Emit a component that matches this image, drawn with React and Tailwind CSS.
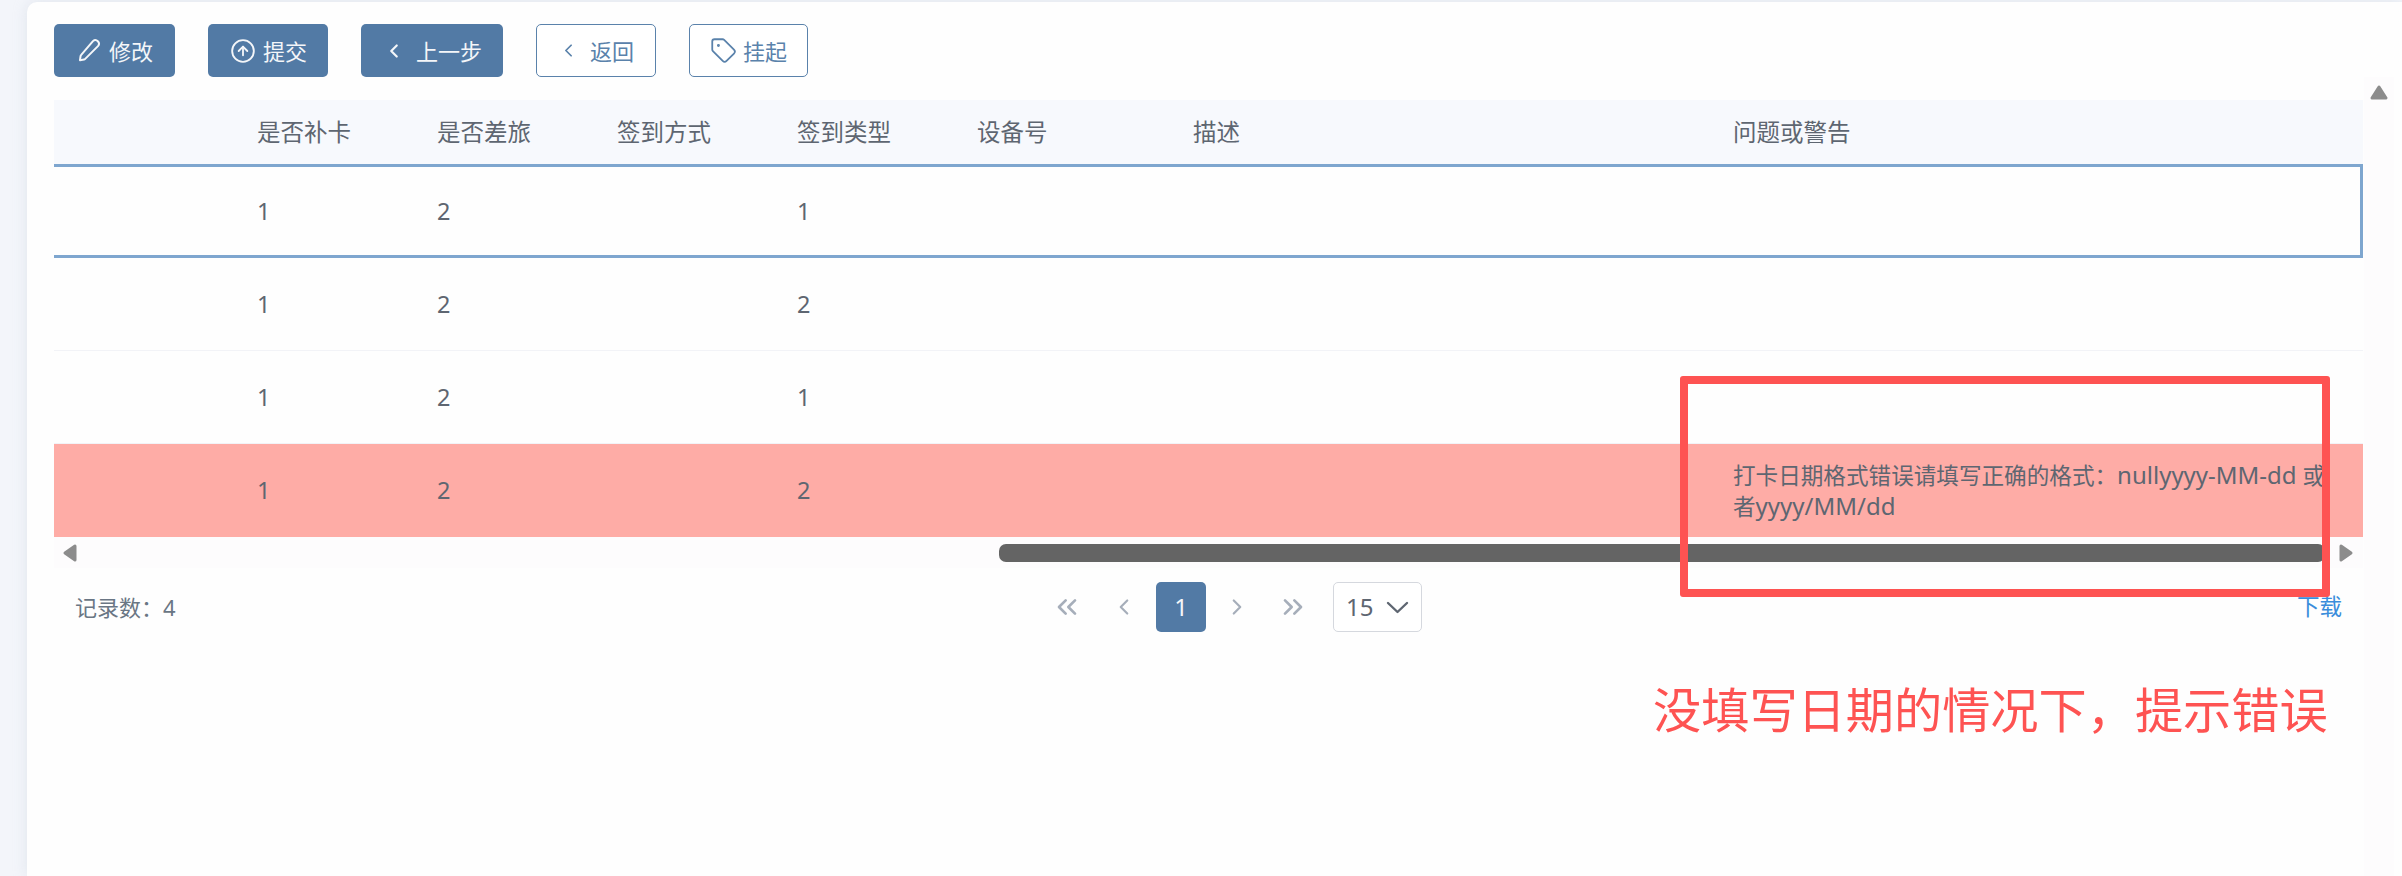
import { ChevronLeft, ChevronRight, ChevronsLeft, ChevronsRight, CircleArrowUp, Tag } from 'lucide-react';

const font = 'font-["Noto_Sans","Noto_Sans_CJK_SC",sans-serif]';
const cols = 'grid grid-cols-[203px_180px_180px_180px_180px_216px_540px_1fr] items-center';

const rows = [
  { a: '1', b: '2', c: '1' },
  { a: '1', b: '2', c: '2' },
  { a: '1', b: '2', c: '1' },
  { a: '1', b: '2', c: '2', error: true },
];

function PencilIcon() {
  return (
    <svg width="25" height="25" viewBox="0 0 24 24" fill="none" stroke="currentColor" strokeWidth="1.9" strokeLinejoin="round" strokeLinecap="round">
      <path d="M16.3 3a3.4 3.4 0 0 1 4.8 4.8L8.6 20.3a1.4 1.4 0 0 1-.8.4l-4 .6.6-4a1.4 1.4 0 0 1 .4-.8z" />
    </svg>
  );
}

function Arrow({ width, height, viewBox, points }) {
  return (
    <svg width={width} height={height} viewBox={viewBox}>
      <polygon points={points} fill="#8c8c8c" stroke="#8c8c8c" strokeWidth="3" strokeLinejoin="round" />
    </svg>
  );
}

function Toolbar() {
  return (
    <div className="flex gap-[33px] pl-[27px] pt-[22px] text-[22px] leading-none">
      <button className="flex h-[53px] w-[121px] items-center gap-[8px] rounded-[5px] bg-[#527aa5] pl-[22px] text-[#f4f6f9]">
        <PencilIcon />
        修改
      </button>
      <button className="flex h-[53px] w-[120px] items-center gap-[7px] rounded-[5px] bg-[#527aa5] pl-[22px] text-[#f4f6f9]">
        <CircleArrowUp size={26} strokeWidth={1.7} />
        提交
      </button>
      <button className="flex h-[53px] w-[142px] items-center gap-[11px] rounded-[5px] bg-[#527aa5] pl-[22px] text-[#f4f6f9]">
        <ChevronLeft size={22} strokeWidth={2.4} />
        上一步
      </button>
      <button className="flex h-[53px] w-[120px] items-center gap-[11px] rounded-[5px] border border-[#5a82ab] bg-white pl-[21px] text-[#5a82ab]">
        <ChevronLeft size={21} strokeWidth={2} />
        返回
      </button>
      <button className="flex h-[53px] w-[119px] items-center gap-[6px] rounded-[5px] border border-[#5a82ab] bg-white pl-[20px] text-[#5a82ab]">
        <Tag size={27} strokeWidth={1.6} />
        挂起
      </button>
    </div>
  );
}

function Table() {
  return (
    <div className="text-[23.5px] text-[#5e6671]">
      <div className={`${cols} h-[64px] bg-[#f7f9fd] pt-[2px]`}>
        <div />
        <div>是否补卡</div>
        <div>是否差旅</div>
        <div>签到方式</div>
        <div>签到类型</div>
        <div>设备号</div>
        <div>描述</div>
        <div>问题或警告</div>
      </div>
      {rows.map((row, i) => (
        <div
          key={i}
          className={`${cols} ${
            i === 0
              ? 'h-[94px] border-y-[3px] border-r-[3px] border-[#7ea6cf] pt-[1px]'
              : i === 3
                ? 'h-[93px] bg-[#feaca6] pt-[1px]'
                : 'h-[93px] border-b border-[#f2f3f7] pt-[1px]'
          }`}
        >
          <div />
          <div>{row.a}</div>
          <div>{row.b}</div>
          <div />
          <div>{row.c}</div>
          <div />
          <div />
          <div className="w-[600px] text-[22.6px] leading-[30px]">
            {row.error && (
              <>
                打卡日期格式错误请填写正确的格式：<span className="text-[24px]">nullyyyy-MM-dd</span> 或者<span className="text-[24px]">yyyy/MM/dd</span>
              </>
            )}
          </div>
        </div>
      ))}
      <div className="flex h-[31px] items-center bg-[#fdfcfd] pl-[9px] pr-[10px]">
        <Arrow width="14" height="18" viewBox="0 0 14 18" points="12,2 12,16 2,9" />
        <div className="ml-[922px] mr-[14px] h-[18px] flex-1 rounded-[7px] bg-[#646464]" />
        <Arrow width="14" height="18" viewBox="0 0 14 18" points="2,2 2,16 12,9" />
      </div>
    </div>
  );
}

function Pagination() {
  return (
    <div className="relative mt-[14px] flex h-[50px] items-center justify-between pl-[21px] pr-[21px]">
      <span className="text-[22px] text-[#6a7684]">记录数：4</span>
      <div className="absolute left-[997px] top-0 flex h-[50px] items-center text-[#a6aeba]">
        <ChevronsLeft size={32} strokeWidth={2} />
        <ChevronLeft size={26} strokeWidth={2} className="ml-[28px]" />
        <span className="ml-[19px] flex h-[50px] w-[50px] items-center justify-center rounded-[5px] bg-[#527aa5] text-[24px] text-[#f4f6f9]">1</span>
        <ChevronRight size={26} strokeWidth={2} className="ml-[18px]" />
        <ChevronsRight size={32} strokeWidth={2} className="ml-[27px]" />
        <div className="ml-[24px] flex h-[50px] w-[89px] items-center gap-[13px] rounded-[5px] border border-[#d5d8de] bg-white pl-[12px] text-[24px] text-[#5e6671]">
          15
          <svg width="23" height="13" viewBox="0 0 23 13" fill="none" stroke="currentColor" strokeWidth="2.4" strokeLinecap="round" strokeLinejoin="round">
            <path d="M2 2l9.5 9L21 2" />
          </svg>
        </div>
      </div>
      <span className="text-[22.5px] text-[#3a8ddb]">下载</span>
    </div>
  );
}

export default function App() {
  return (
    <div className={`${font} flex h-[876px] w-[2402px] overflow-hidden bg-[#f3f5fa] pl-[27px] pt-[2px]`}>
      <div className="relative flex flex-1 flex-col rounded-tl-[10px] bg-[#fefefe] shadow-[0_0_14px_rgba(190,200,215,0.35)]">
        <Toolbar />
        <div className="flex flex-1">
          <div className="flex-1 pl-[27px] pt-[23px]">
            <Table />
            <Pagination />
          </div>
          <div className="ml-[1px] mr-[8px] flex w-[30px] justify-center bg-[#fdfcfd] pt-[8px]">
            <Arrow width="18" height="15" viewBox="0 0 18 15" points="9,2 16,13 2,13" />
          </div>
        </div>
        {/* annotation drawn over the screenshot */}
        <div className="absolute left-[1653px] top-[374px] h-[221px] w-[650px] rounded-[3px] border-[8px] border-[#fe5352]" />
        <div className="absolute left-[1626px] top-[677px] text-[48.2px] leading-[60px] text-[#fe5352]">
          没填写日期的情况下，提示错误
        </div>
      </div>
    </div>
  );
}
